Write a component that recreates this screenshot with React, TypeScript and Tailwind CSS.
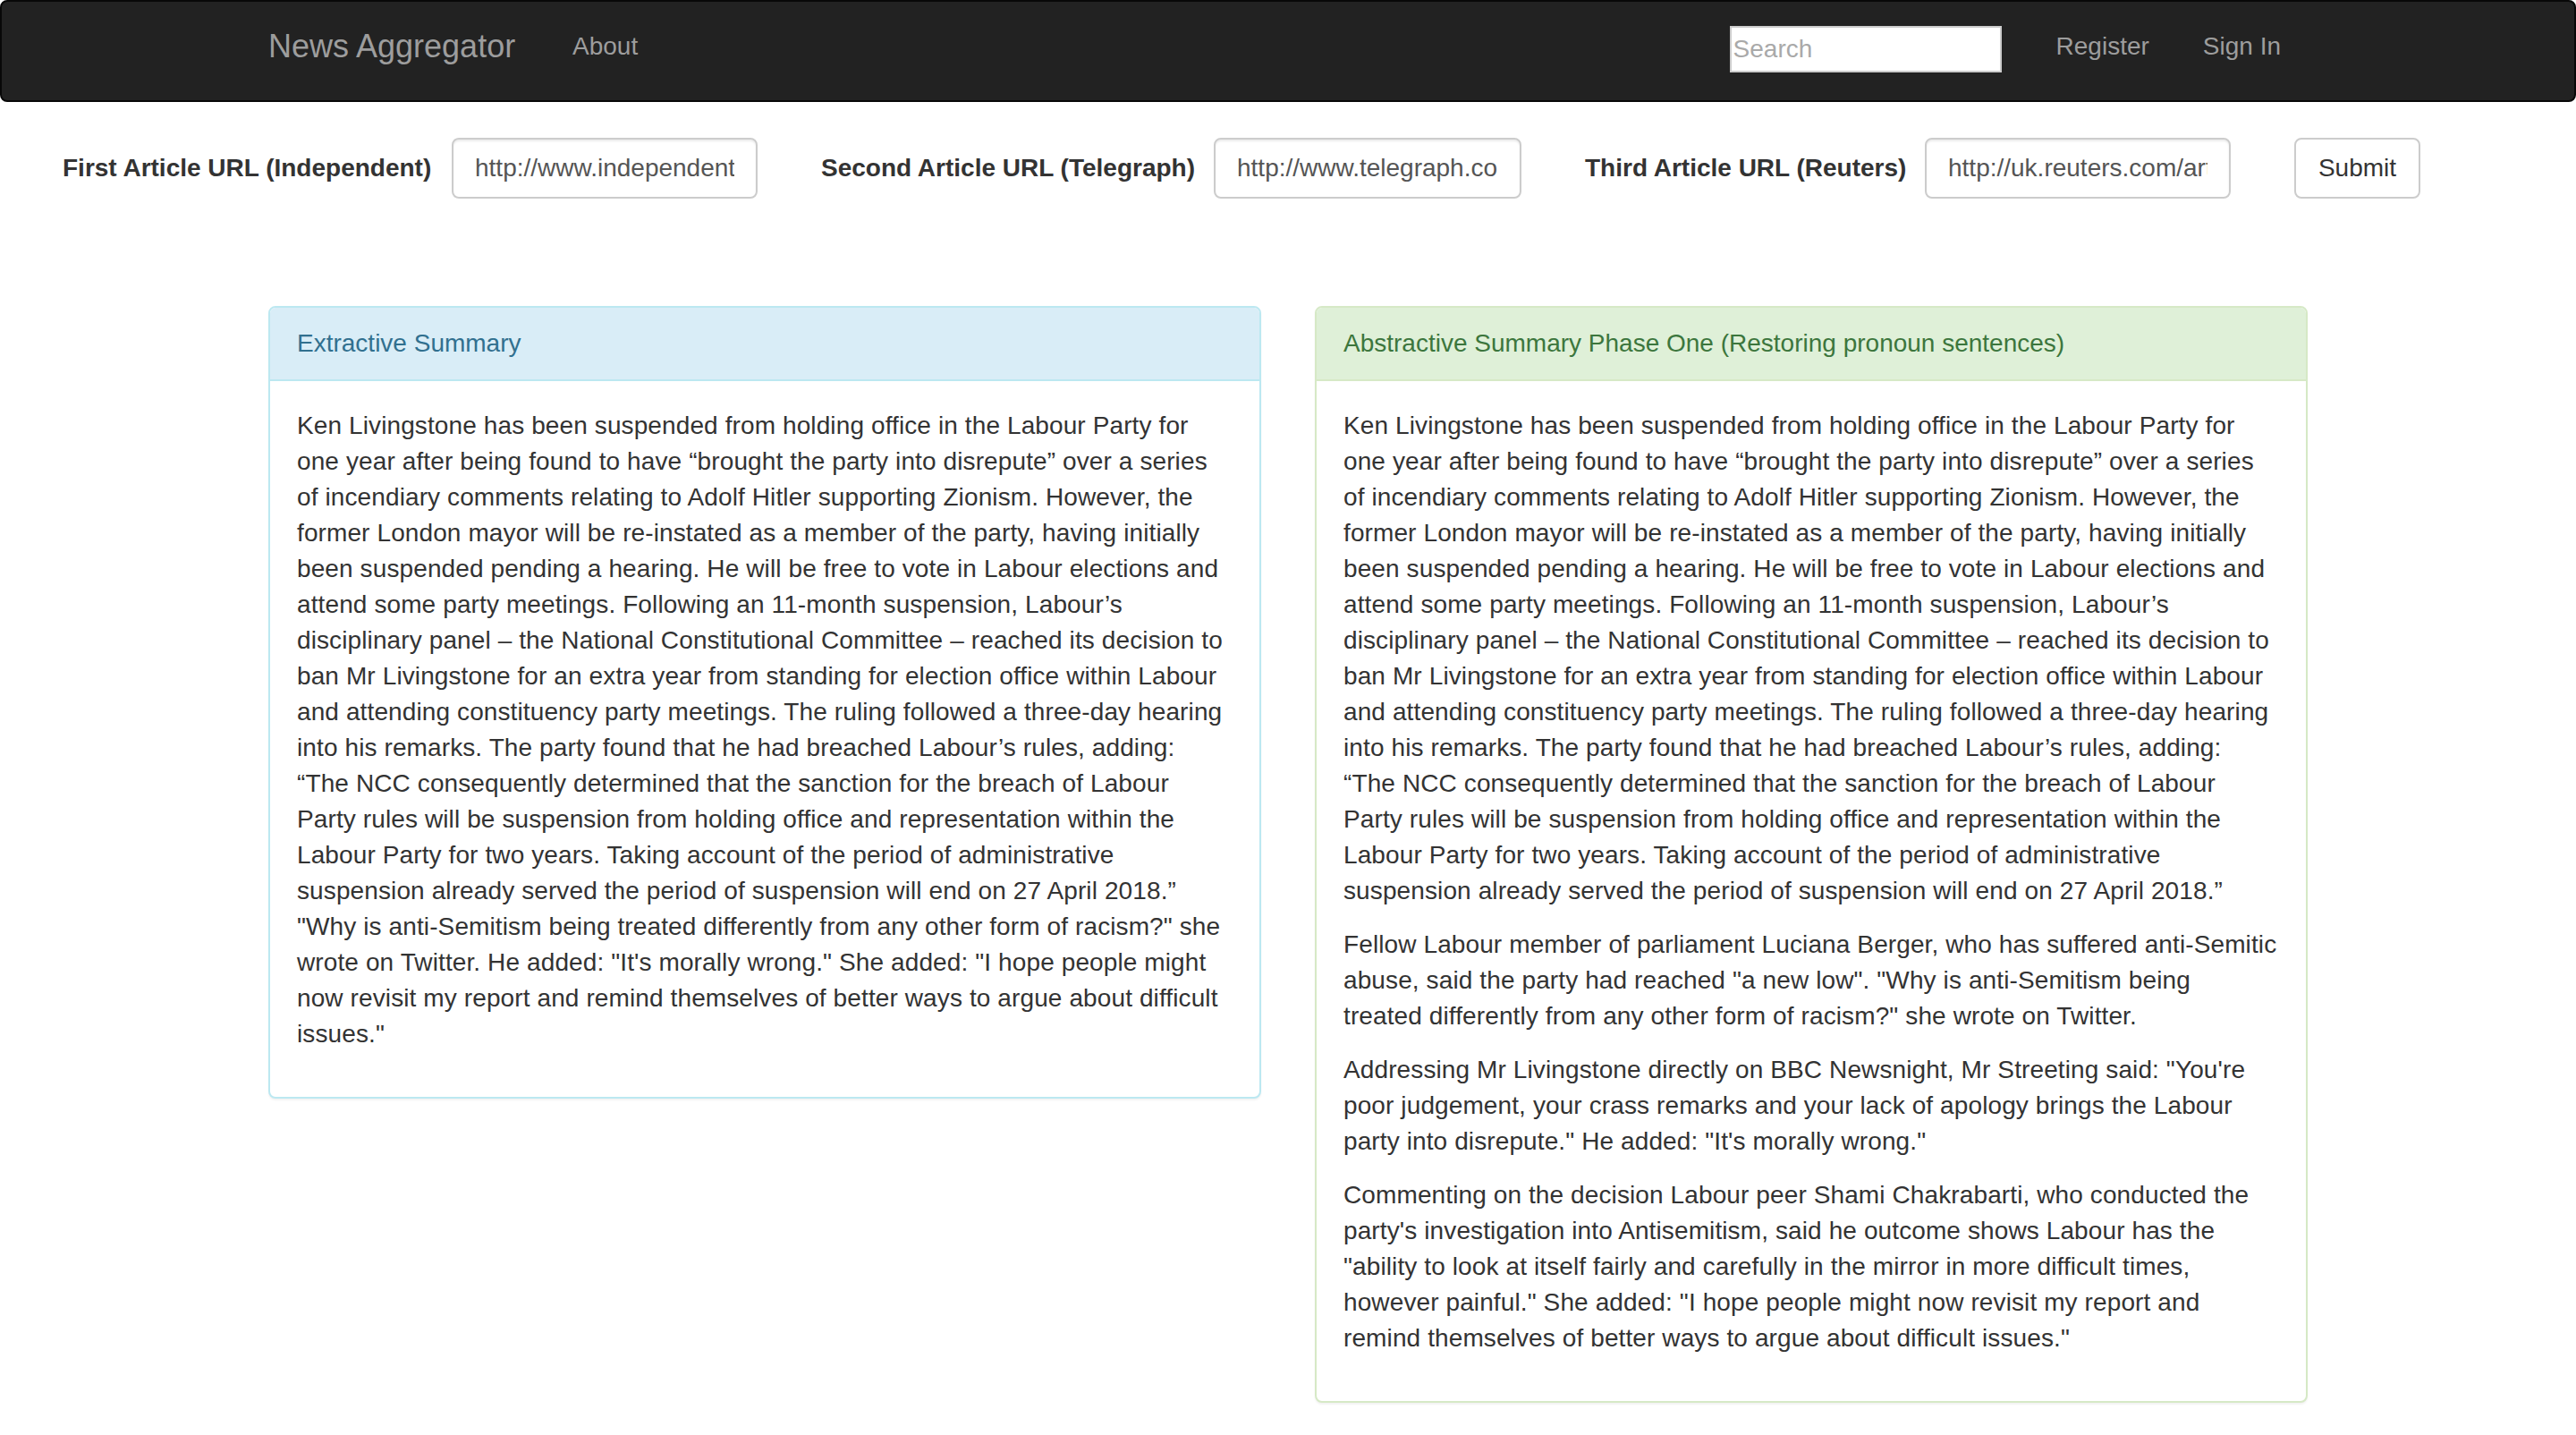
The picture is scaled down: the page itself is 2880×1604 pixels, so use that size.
import React from "react";

const intro = [
  "Ken Livingstone has been suspended from holding office in the Labour Party for",
  "one year after being found to have “brought the party into disrepute” over a series",
  "of incendiary comments relating to Adolf Hitler supporting Zionism. However, the",
  "former London mayor will be re-instated as a member of the party, having initially",
  "been suspended pending a hearing. He will be free to vote in Labour elections and",
  "attend some party meetings. Following an 11-month suspension, Labour’s",
  "disciplinary panel – the National Constitutional Committee – reached its decision to",
  "ban Mr Livingstone for an extra year from standing for election office within Labour",
  "and attending constituency party meetings. The ruling followed a three-day hearing",
  "into his remarks. The party found that he had breached Labour’s rules, adding:",
  "“The NCC consequently determined that the sanction for the breach of Labour",
  "Party rules will be suspension from holding office and representation within the",
  "Labour Party for two years. Taking account of the period of administrative",
  "suspension already served the period of suspension will end on 27 April 2018.”",
];

const extractive = [
  [
    ...intro,
    "\"Why is anti-Semitism being treated differently from any other form of racism?\" she",
    "wrote on Twitter. He added: \"It's morally wrong.\" She added: \"I hope people might",
    "now revisit my report and remind themselves of better ways to argue about difficult",
    "issues.\"",
  ],
];

const abstractive = [
  intro,
  [
    "Fellow Labour member of parliament Luciana Berger, who has suffered anti-Semitic",
    "abuse, said the party had reached \"a new low\". \"Why is anti-Semitism being",
    "treated differently from any other form of racism?\" she wrote on Twitter.",
  ],
  [
    "Addressing Mr Livingstone directly on BBC Newsnight, Mr Streeting said: \"You're",
    "poor judgement, your crass remarks and your lack of apology brings the Labour",
    "party into disrepute.\" He added: \"It's morally wrong.\"",
  ],
  [
    "Commenting on the decision Labour peer Shami Chakrabarti, who conducted the",
    "party's investigation into Antisemitism, said he outcome shows Labour has the",
    "\"ability to look at itself fairly and carefully in the mirror in more difficult times,",
    "however painful.\" She added: \"I hope people might now revisit my report and",
    "remind themselves of better ways to argue about difficult issues.\"",
  ],
];

const urlFields = [
  {
    label: "First Article URL (Independent)",
    value: "http://www.independent.co.uk/news/uk/politics/ken-livingstone",
    labelWidth: "w-[435px]",
    inputWidth: "w-[342px]",
    first: true,
  },
  {
    label: "Second Article URL (Telegraph)",
    value: "http://www.telegraph.co.uk/news/2017/04/04/ken-livingstone",
    labelWidth: "w-[439px]",
    inputWidth: "w-[344px]",
    first: false,
  },
  {
    label: "Third Article URL (Reuters)",
    value: "http://uk.reuters.com/article/uk-britain-politics-livingstone",
    labelWidth: "w-[380px]",
    inputWidth: "w-[342px]",
    first: false,
  },
];

function Panel({
  title,
  paragraphs,
  variant,
}: {
  title: string;
  paragraphs: string[][];
  variant: "info" | "success";
}) {
  const isInfo = variant === "info";
  return (
    <div
      className={`rounded-[8px] border-2 bg-white shadow-[0_2px_2px_rgba(0,0,0,0.05)] ${
        isInfo ? "border-[#bce8f1]" : "border-[#d6e9c6]"
      }`}
    >
      <div
        className={`rounded-t-[6px] border-b-2 px-[30px] py-[20px] ${
          isInfo
            ? "border-[#bce8f1] bg-[#d9edf7] text-[#31708f]"
            : "border-[#d6e9c6] bg-[#dff0d8] text-[#3c763d]"
        }`}
      >
        {title}
      </div>
      <div className="p-[30px] tracking-[0.11px]">
        {paragraphs.map((lines, i) => (
          <p key={i} className="mb-[20px] whitespace-nowrap">
            {lines.map((line, j) => (
              <React.Fragment key={j}>
                {line}
                {j < lines.length - 1 && <br />}
              </React.Fragment>
            ))}
          </p>
        ))}
      </div>
    </div>
  );
}

export default function App() {
  return (
    <div className="min-h-screen bg-white font-['Liberation_Sans',Arial,sans-serif] text-[28px] leading-[40px] text-[#333]">
      <nav className="h-[114px] rounded-[8px] border-2 border-[#080808] bg-[#222]">
        <div className="mx-auto flex h-full w-[2340px] items-center px-[30px]">
          <a href="#" className="w-[340px] pb-[10px] text-[36px] leading-[40px] text-[#9d9d9d]">
            News Aggregator
          </a>
          <a href="#" className="pb-[10px] text-[#9d9d9d]">
            About
          </a>
          <div className="ml-auto flex items-center">
            <input
              type="text"
              placeholder="Search"
              className="mr-[31px] mb-[4px] h-[52px] w-[304px] border-2 border-[#ccc] bg-white px-[2px] text-[28px] text-[#333] placeholder:text-[#a9a9a9] outline-none"
            />
            <a href="#" className="px-[30px] pb-[10px] text-[#9d9d9d]">
              Register
            </a>
            <a href="#" className="px-[30px] pb-[10px] text-[#9d9d9d]">
              Sign In
            </a>
          </div>
        </div>
      </nav>

      <form className="mt-[40px] flex items-center pl-[70px]">
        {urlFields.map((f) => (
          <div key={f.label} className={`flex items-center ${f.first ? "" : "ml-[71px]"}`}>
            <label className={`${f.labelWidth} font-bold whitespace-nowrap`}>{f.label}</label>
            <input
              type="text"
              readOnly
              defaultValue={f.value}
              className={`${f.inputWidth} h-[68px] rounded-[8px] border-2 border-[#ccc] bg-white px-[24px] text-[28px] text-[#555] shadow-[inset_0_2px_2px_rgba(0,0,0,0.075)] outline-none`}
            />
          </div>
        ))}
        <button
          type="button"
          className="ml-[71px] h-[68px] w-[141px] rounded-[8px] border-2 border-[#ccc] bg-white text-[28px] text-[#333]"
        >
          Submit
        </button>
      </form>

      <div className="mx-auto mt-[120px] grid w-[2340px] grid-cols-2 items-start gap-[60px] px-[30px]">
        <Panel title="Extractive Summary" paragraphs={extractive} variant="info" />
        <Panel
          title="Abstractive Summary Phase One (Restoring pronoun sentences)"
          paragraphs={abstractive}
          variant="success"
        />
      </div>
    </div>
  );
}
